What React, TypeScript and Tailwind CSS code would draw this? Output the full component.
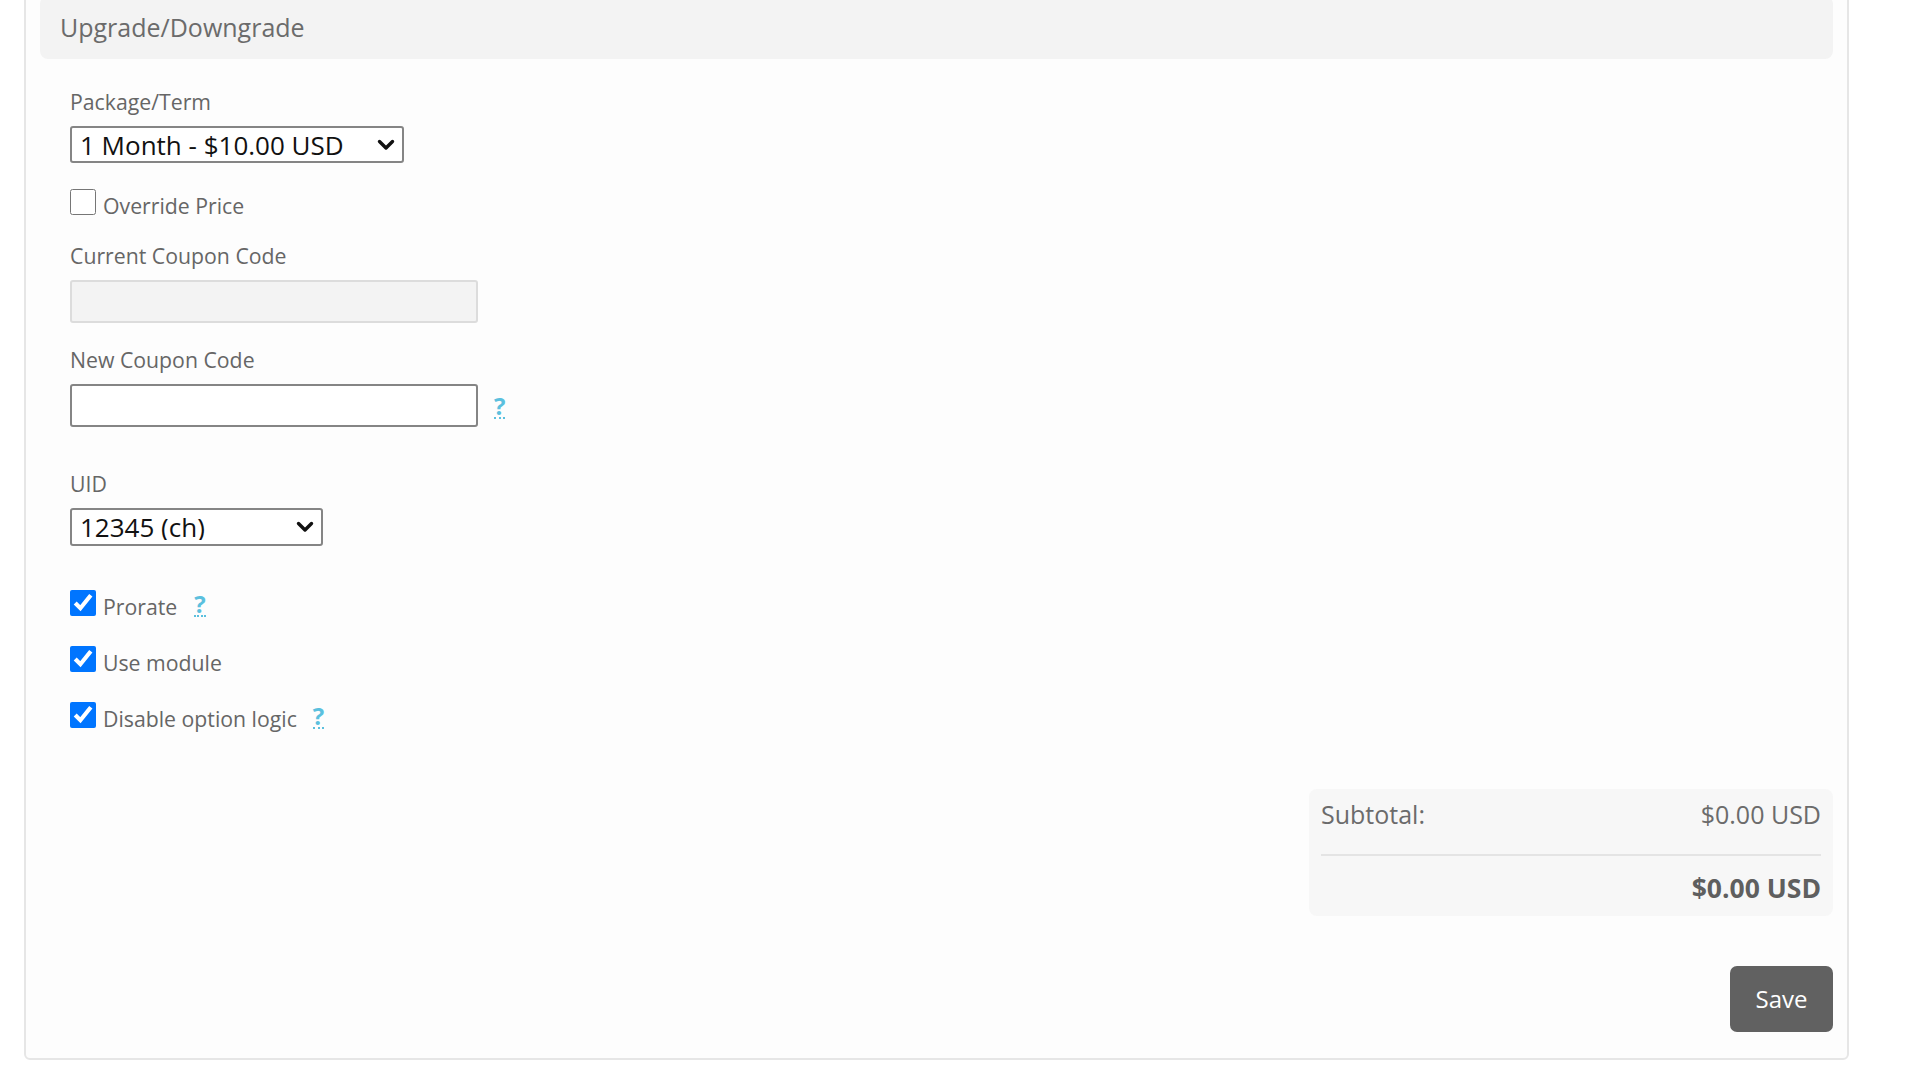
import React from "react";

const font = { fontFamily: '"Open Sans", "Noto Sans", Arial, sans-serif' };

function Chevron() {
  return (
    <svg
      width="18"
      height="12"
      viewBox="0 0 18 12"
      className="pointer-events-none absolute right-[9px] top-1/2 -translate-y-1/2"
    >
      <path d="M2.5 2.5 L9 9 L15.5 2.5" fill="none" stroke="#111" strokeWidth="3.4" strokeLinecap="round" strokeLinejoin="round" />
    </svg>
  );
}

function Select({ value, width, height }: { value: string; width: string; height: string }) {
  return (
    <div className={`relative ${width} ${height}`}>
      <select
        defaultValue={value}
        className="h-full w-full appearance-none rounded-[3px] border-2 border-[#858585] bg-white pl-[8px] pr-[36px] text-[26px] leading-none text-[#111]"
        style={font}
      >
        <option>{value}</option>
      </select>
      <Chevron />
    </div>
  );
}

function Help() {
  return (
    <span className="inline-block cursor-help border-b-2 border-dotted border-[#5bc0de] text-[24px] font-bold leading-[22px] text-[#5bc0de]">
      ?
    </span>
  );
}

function Check({ label, checked, help, helpGap }: { label: string; checked: boolean; help?: boolean; helpGap?: string }) {
  return (
    <label className="flex items-start">
      <input type="checkbox" defaultChecked={checked} className="m-0 h-[26px] w-[26px] shrink-0" />
      <span className="ml-[7px] mt-[2px] text-[21.25px] leading-[30px] text-[#666]">{label}</span>
      {help && (
        <span className={`${helpGap} mt-[3px]`}>
          <Help />
        </span>
      )}
    </label>
  );
}

function FieldLabel({ children, className = "" }: { children: React.ReactNode; className?: string }) {
  return <div className={`h-[30px] text-[21.25px] leading-[30px] text-[#666] ${className}`}>{children}</div>;
}

export default function App() {
  return (
    <div className="min-h-[1080px] w-[1920px] overflow-hidden bg-white" style={font}>
      <div className="-mt-[20px] ml-[24px] w-[1825px] rounded-[6px] border-2 border-[#e6e6e6] bg-[#fdfdfd] px-[14px] pb-[26px] pt-[14px]">
        {/* panel heading */}
        <div className="flex h-[63px] items-center rounded-[8px] bg-[#f3f3f3] pl-[20px] pt-[1px] text-[25px] text-[#6b6b6b]">
          Upgrade/Downgrade
        </div>

        {/* form */}
        <div className="px-[30px]">
          <FieldLabel className="mt-[28px]">Package/Term</FieldLabel>
          <div className="mt-[9px]">
            <Select value="1 Month - $10.00 USD" width="w-[334px]" height="h-[37px]" />
          </div>

          <div className="mt-[26px]">
            <Check label="Override Price" checked={false} />
          </div>

          <FieldLabel className="mt-[20px]">Current Coupon Code</FieldLabel>
          <input
            disabled
            className="mt-[9px] block h-[43px] w-[408px] rounded-[3px] border-2 border-[#dcdcdc] bg-[#f3f3f3]"
          />

          <FieldLabel className="mt-[22px]">New Coupon Code</FieldLabel>
          <div className="mt-[9px] flex items-center">
            <input className="block h-[43px] w-[408px] rounded-[3px] border-2 border-[#858585] bg-white px-2 text-[22px] outline-none" />
            <span className="ml-[16px] mt-[4px]">
              <Help />
            </span>
          </div>

          <FieldLabel className="mt-[42px]">UID</FieldLabel>
          <div className="mt-[9px]">
            <Select value="12345 (ch)" width="w-[253px]" height="h-[38px]" />
          </div>

          <div className="mt-[44px] flex flex-col gap-[24px]">
            <Check label="Prorate" checked help helpGap="ml-[17px]" />
            <Check label="Use module" checked />
            <Check label="Disable option logic" checked help helpGap="ml-[16px]" />
          </div>
        </div>

        {/* totals */}
        <div className="mt-[55px] flex justify-end">
          <div className="w-[524px] rounded-[8px] bg-[#f7f7f7] px-[12px] pb-[13px] pt-[10px] text-[25px] text-[#6b6b6b]">
            <div className="flex h-[30px] items-center justify-between leading-[30px]">
              <span>Subtotal:</span>
              <span>$0.00 USD</span>
            </div>
            <div className="mt-[25px] h-[2px] bg-[#e4e4e4]" />
            <div className="mt-[17px] flex h-[30px] items-center justify-end text-[26.5px] font-bold leading-[30px] text-[#5f5f5f]">
              $0.00 USD
            </div>
          </div>
        </div>

        <div className="mt-[50px] flex justify-end">
          <button className="h-[66px] w-[103px] rounded-[7px] bg-[#616161] text-[24px] text-white">Save</button>
        </div>
      </div>
    </div>
  );
}
